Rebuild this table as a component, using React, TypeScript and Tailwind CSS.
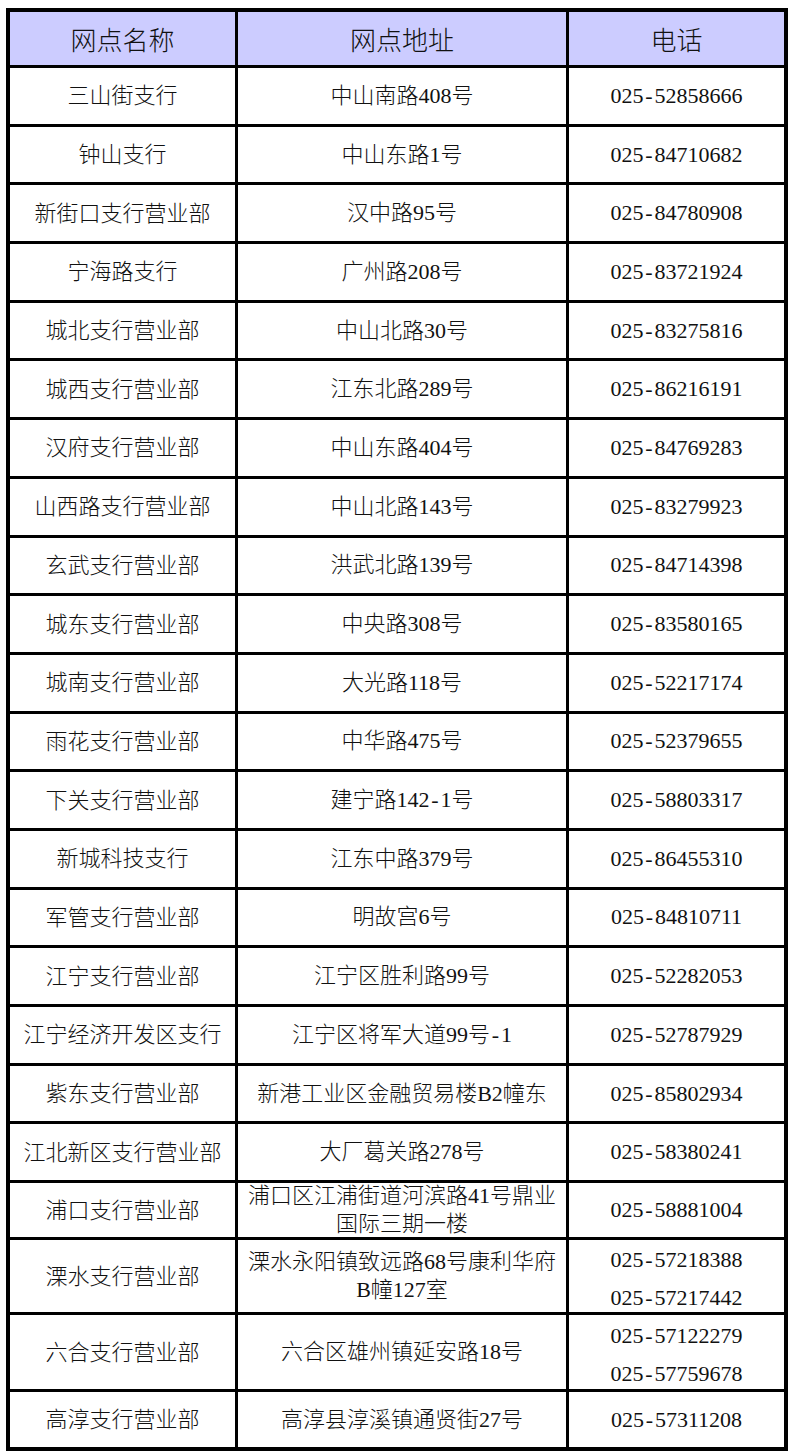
const branches: { name: string; addr: string[]; phones: string[]; h: string }[] = [
  { name: "三山街支行", addr: ["中山南路408号"], phones: ["025-52858666"], h: "h-[55.7px]" },
  { name: "钟山支行", addr: ["中山东路1号"], phones: ["025-84710682"], h: "h-[55.7px]" },
  { name: "新街口支行营业部", addr: ["汉中路95号"], phones: ["025-84780908"], h: "h-[55.7px]" },
  { name: "宁海路支行", addr: ["广州路208号"], phones: ["025-83721924"], h: "h-[55.7px]" },
  { name: "城北支行营业部", addr: ["中山北路30号"], phones: ["025-83275816"], h: "h-[55.7px]" },
  { name: "城西支行营业部", addr: ["江东北路289号"], phones: ["025-86216191"], h: "h-[55.7px]" },
  { name: "汉府支行营业部", addr: ["中山东路404号"], phones: ["025-84769283"], h: "h-[55.7px]" },
  { name: "山西路支行营业部", addr: ["中山北路143号"], phones: ["025-83279923"], h: "h-[55.7px]" },
  { name: "玄武支行营业部", addr: ["洪武北路139号"], phones: ["025-84714398"], h: "h-[55.7px]" },
  { name: "城东支行营业部", addr: ["中央路308号"], phones: ["025-83580165"], h: "h-[55.7px]" },
  { name: "城南支行营业部", addr: ["大光路118号"], phones: ["025-52217174"], h: "h-[55.7px]" },
  { name: "雨花支行营业部", addr: ["中华路475号"], phones: ["025-52379655"], h: "h-[55.7px]" },
  { name: "下关支行营业部", addr: ["建宁路142-1号"], phones: ["025-58803317"], h: "h-[55.7px]" },
  { name: "新城科技支行", addr: ["江东中路379号"], phones: ["025-86455310"], h: "h-[55.7px]" },
  { name: "军管支行营业部", addr: ["明故宫6号"], phones: ["025-84810711"], h: "h-[55.7px]" },
  { name: "江宁支行营业部", addr: ["江宁区胜利路99号"], phones: ["025-52282053"], h: "h-[55.7px]" },
  { name: "江宁经济开发区支行", addr: ["江宁区将军大道99号-1"], phones: ["025-52787929"], h: "h-[55.7px]" },
  { name: "紫东支行营业部", addr: ["新港工业区金融贸易楼B2幢东"], phones: ["025-85802934"], h: "h-[55.7px]" },
  { name: "江北新区支行营业部", addr: ["大厂葛关路278号"], phones: ["025-58380241"], h: "h-[55.7px]" },
  { name: "浦口支行营业部", addr: ["浦口区江浦街道河滨路41号鼎业", "国际三期一楼"], phones: ["025-58881004"], h: "h-[54px]" },
  { name: "溧水支行营业部", addr: ["溧水永阳镇致远路68号康利华府", "B幢127室"], phones: ["025-57218388", "025-57217442"], h: "h-[72px]" },
  { name: "六合支行营业部", addr: ["六合区雄州镇延安路18号"], phones: ["025-57122279", "025-57759678"], h: "h-[74px]" },
  { name: "高淳支行营业部", addr: ["高淳县淳溪镇通贤街27号"], phones: ["025-57311208"], h: "h-[55px]" },
];

const cell = "flex flex-col items-center justify-center bg-white text-center";

// the source font draws "-" as wide as a digit
function Dashed({ text }: { text: string }) {
  const parts = text.split("-");
  return (
    <span>
      {parts.map((p, i) => (
        <span key={i}>
          {i > 0 && <span className="inline-block w-[0.5em] text-center">-</span>}
          {p}
        </span>
      ))}
    </span>
  );
}

export default function App() {
  return (
    <div
      className="min-h-[1454px] w-[797px] bg-white pt-2 pl-[6px] text-[22px] font-light text-[#111]"
      style={{ fontFamily: '"Liberation Serif", "Noto Sans CJK SC Light", "Noto Sans CJK SC", serif' }}
    >
      <div className="grid w-[782px] grid-cols-[225px_328px_215px] gap-[3px] border-4 border-black bg-black">
        <div className="flex h-[53px] items-center justify-center bg-[#ccccff] pt-[6px] text-[26px]">网点名称</div>
        <div className="flex h-[53px] items-center justify-center bg-[#ccccff] pt-[6px] text-[26px]">网点地址</div>
        <div className="flex h-[53px] items-center justify-center bg-[#ccccff] pt-[6px] text-[26px]">电话</div>
        {branches.map((b) => (
          <div key={b.name} className="contents">
            <div className={`${cell} ${b.h}`}>{b.name}</div>
            <div className={`${cell} ${b.h} leading-[28px]`}>
              {b.addr.map((line) => (
                <Dashed key={line} text={line} />
              ))}
            </div>
            <div className={`${cell} ${b.h} leading-[38px] ${b.phones.length > 1 ? "pt-[6px]" : ""}`}>
              {b.phones.map((p) => (
                <Dashed key={p} text={p} />
              ))}
            </div>
          </div>
        ))}
      </div>
    </div>
  );
}
